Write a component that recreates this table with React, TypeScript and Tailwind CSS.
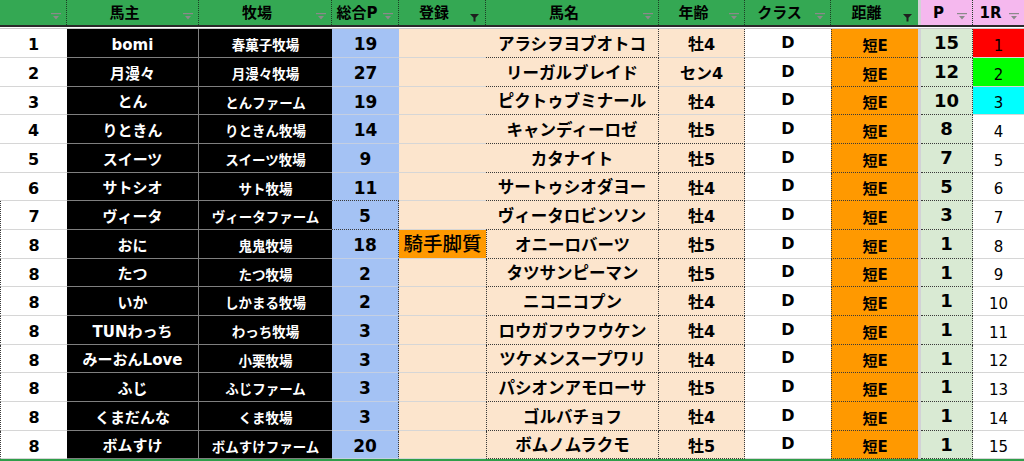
import React from "react";

// 列幅 (px): 順位, 馬主, 牧場, 総合P, 登録, 馬名, 年齢, クラス, 距離, 区切り, P, 1R
const GRID =
  "grid grid-cols-[67px_132px_133px_67px_87px_173px_86px_86px_87px_3px_52px_51px]";

type RowData = [string, string, string, string, string, string, string, string, string];

const rows: RowData[] = [
  ["1", "bomi", "春菓子牧場", "19", "", "アラシヲヨブオトコ", "牡4", "15", "1"],
  ["2", "月漫々", "月漫々牧場", "27", "", "リーガルブレイド", "セン4", "12", "2"],
  ["3", "とん", "とんファーム", "19", "", "ピクトゥブミナール", "牡4", "10", "3"],
  ["4", "りときん", "りときん牧場", "14", "", "キャンディーロゼ", "牡5", "8", "4"],
  ["5", "スイーツ", "スイーツ牧場", "9", "", "カタナイト", "牡5", "7", "5"],
  ["6", "サトシオ", "サト牧場", "11", "", "サートゥシオダヨー", "牡4", "5", "6"],
  ["7", "ヴィータ", "ヴィータファーム", "5", "", "ヴィータロビンソン", "牡4", "3", "7"],
  ["8", "おに", "鬼鬼牧場", "18", "騎手脚質", "オニーロバーツ", "牡5", "1", "8"],
  ["8", "たつ", "たつ牧場", "2", "", "タツサンピーマン", "牡5", "1", "9"],
  ["8", "いか", "しかまる牧場", "2", "", "ニコニコプン", "牡4", "1", "10"],
  ["8", "TUNわっち", "わっち牧場", "3", "", "ロウガフウフウケン", "牡4", "1", "11"],
  ["8", "みーおんLove", "小栗牧場", "3", "", "ツケメンスープワリ", "牡4", "1", "12"],
  ["8", "ふじ", "ふじファーム", "3", "", "パシオンアモローサ", "牡5", "1", "13"],
  ["8", "くまだんな", "くま牧場", "3", "", "ゴルバチョフ", "牡4", "1", "14"],
  ["8", "ボムすけ", "ボムすけファーム", "20", "", "ボムノムラクモ", "牡5", "1", "15"],
];

const raceBg: Record<string, string> = {
  "1": "bg-[#ff0000]",
  "2": "bg-[#00ff00]",
  "3": "bg-[#00ffff]",
};

function FilterIcon({ active }: { active?: boolean }) {
  if (active) {
    return (
      <svg width="9" height="8" viewBox="0 0 9 8" className="absolute right-[6px] top-[14px]">
        <path d="M0 0H9L5.5 3.8V7.5H3.5V3.8Z" fill="#1f1f1f" />
      </svg>
    );
  }
  return (
    <svg width="10" height="7" viewBox="0 0 10 7" className="absolute right-[5px] top-[13px]">
      <rect x="0" y="0" width="10" height="1.2" fill="#8a8a8a" />
      <path d="M2 3H8L5 6.5Z" fill="#8a8a8a" />
    </svg>
  );
}

function Head({ label, pink, active, last }: { label: string; pink?: boolean; active?: boolean; last?: boolean }) {
  return (
    <div
      className={`relative flex h-full items-center justify-center pr-[16px] text-[15px] leading-[20px] font-bold text-black ${
        pink ? "bg-[#f5b8ee]" : "bg-[#34a853]"
      } ${last ? "" : "border-r border-[#1d3d25] [border-right-style:dotted]"}`}
    >
      {label}
      <FilterIcon active={active} />
    </div>
  );
}

const cell = "flex h-full min-h-0 items-center justify-center overflow-hidden whitespace-nowrap leading-[20px]";
const dotB = "border-b border-b-[#3a3a3a] [border-bottom-style:dotted]";
const dotR = "border-r border-r-[#3a3a3a] [border-right-style:dotted]";
const dotL = "border-l border-l-[#3a3a3a] [border-left-style:dotted]";
const lightB = "border-b border-b-[#d6d6d6]";

function Row({ r, i }: { r: RowData; i: number }) {
  const [rank, owner, farm, total, reg, horse, age, p, race] = r;
  // 15 行で 430px: 29px と 28px を混ぜる
  const h = i % 3 === 2 ? "h-[28px]" : "h-[29px]";
  return (
    <div className={`${GRID} ${h} grid-rows-[100%]`}>
      <div className={`${cell} bg-white pt-[4px] text-[16px] font-bold ${lightB} ${i >= 6 ? dotL : ""}`}>{rank}</div>
      <div className={`${cell} border-b border-r border-[#7f7f7f] bg-black pt-[3px] text-[15px] font-bold text-white`}>
        {owner}
      </div>
      <div className={`${cell} border-b border-[#7f7f7f] bg-black pt-[4px] text-[13.5px] font-bold text-white`}>
        {farm}
      </div>
      <div
        className={`${cell} bg-[#a4c2f4] pt-[2px] text-[17px] font-bold ${
          i === 5 || i === 6 ? dotB : "border-b border-b-[#c4cfe2]"
        } ${i >= 6 ? dotR : ""}`}
      >
        {total}
      </div>
      <div
        className={`${cell} ${reg ? "bg-[#ff9900]" : "bg-[#fce5cd]"} pt-[1px] text-[19.5px] font-medium ${lightB}`}
      >
        {reg}
      </div>
      <div className={`${cell} bg-[#fce5cd] pt-[3px] text-[16.5px] font-bold ${dotB} ${dotR} ${i >= 7 ? dotL : ""}`}>
        {horse}
      </div>
      <div className={`${cell} bg-[#fce5cd] pt-[4px] text-[16px] font-bold ${i >= 3 ? dotB : lightB} ${dotR}`}>
        {age}
      </div>
      <div className={`${cell} bg-white pb-[1px] text-[16px] font-bold ${lightB}`}>D</div>
      <div className={`${cell} bg-[#ff9900] pt-[5px] text-[15px] font-bold ${dotB} ${dotL}`}>短E</div>
      <div className="h-full bg-[#d2d2d6]" />
      <div className={`${cell} bg-[#d9ead3] text-[18px] font-bold ${dotB} ${dotR}`}>{p}</div>
      <div className={`${cell} ${raceBg[race] ?? "bg-white"} pt-[5px] text-[15px] ${lightB}`}>{race}</div>
    </div>
  );
}

export default function App() {
  return (
    <div className="h-[461px] w-[1024px] overflow-hidden bg-white font-['DejaVu_Sans','Noto_Sans_CJK_JP',sans-serif] text-black">
      <div className={`${GRID} h-[27px] border-b-2 border-[#2a2a2a]`}>
        <Head label="" />
        <Head label="馬主" />
        <Head label="牧場" />
        <Head label="総合P" />
        <Head label="登録" active />
        <Head label="馬名" />
        <Head label="年齢" />
        <Head label="クラス" />
        <Head label="距離" active last />
        <div className="h-full bg-[#d2d2d6]" />
        <Head label="P" pink />
        <Head label="1R" pink last />
      </div>
      <div className="h-[2px] border-b border-[#c8c8c8] bg-white" />
      {rows.map((r, i) => (
        <Row key={i} r={r} i={i} />
      ))}
      <div className="h-[2px] bg-[#2f9e4a]" />
    </div>
  );
}
